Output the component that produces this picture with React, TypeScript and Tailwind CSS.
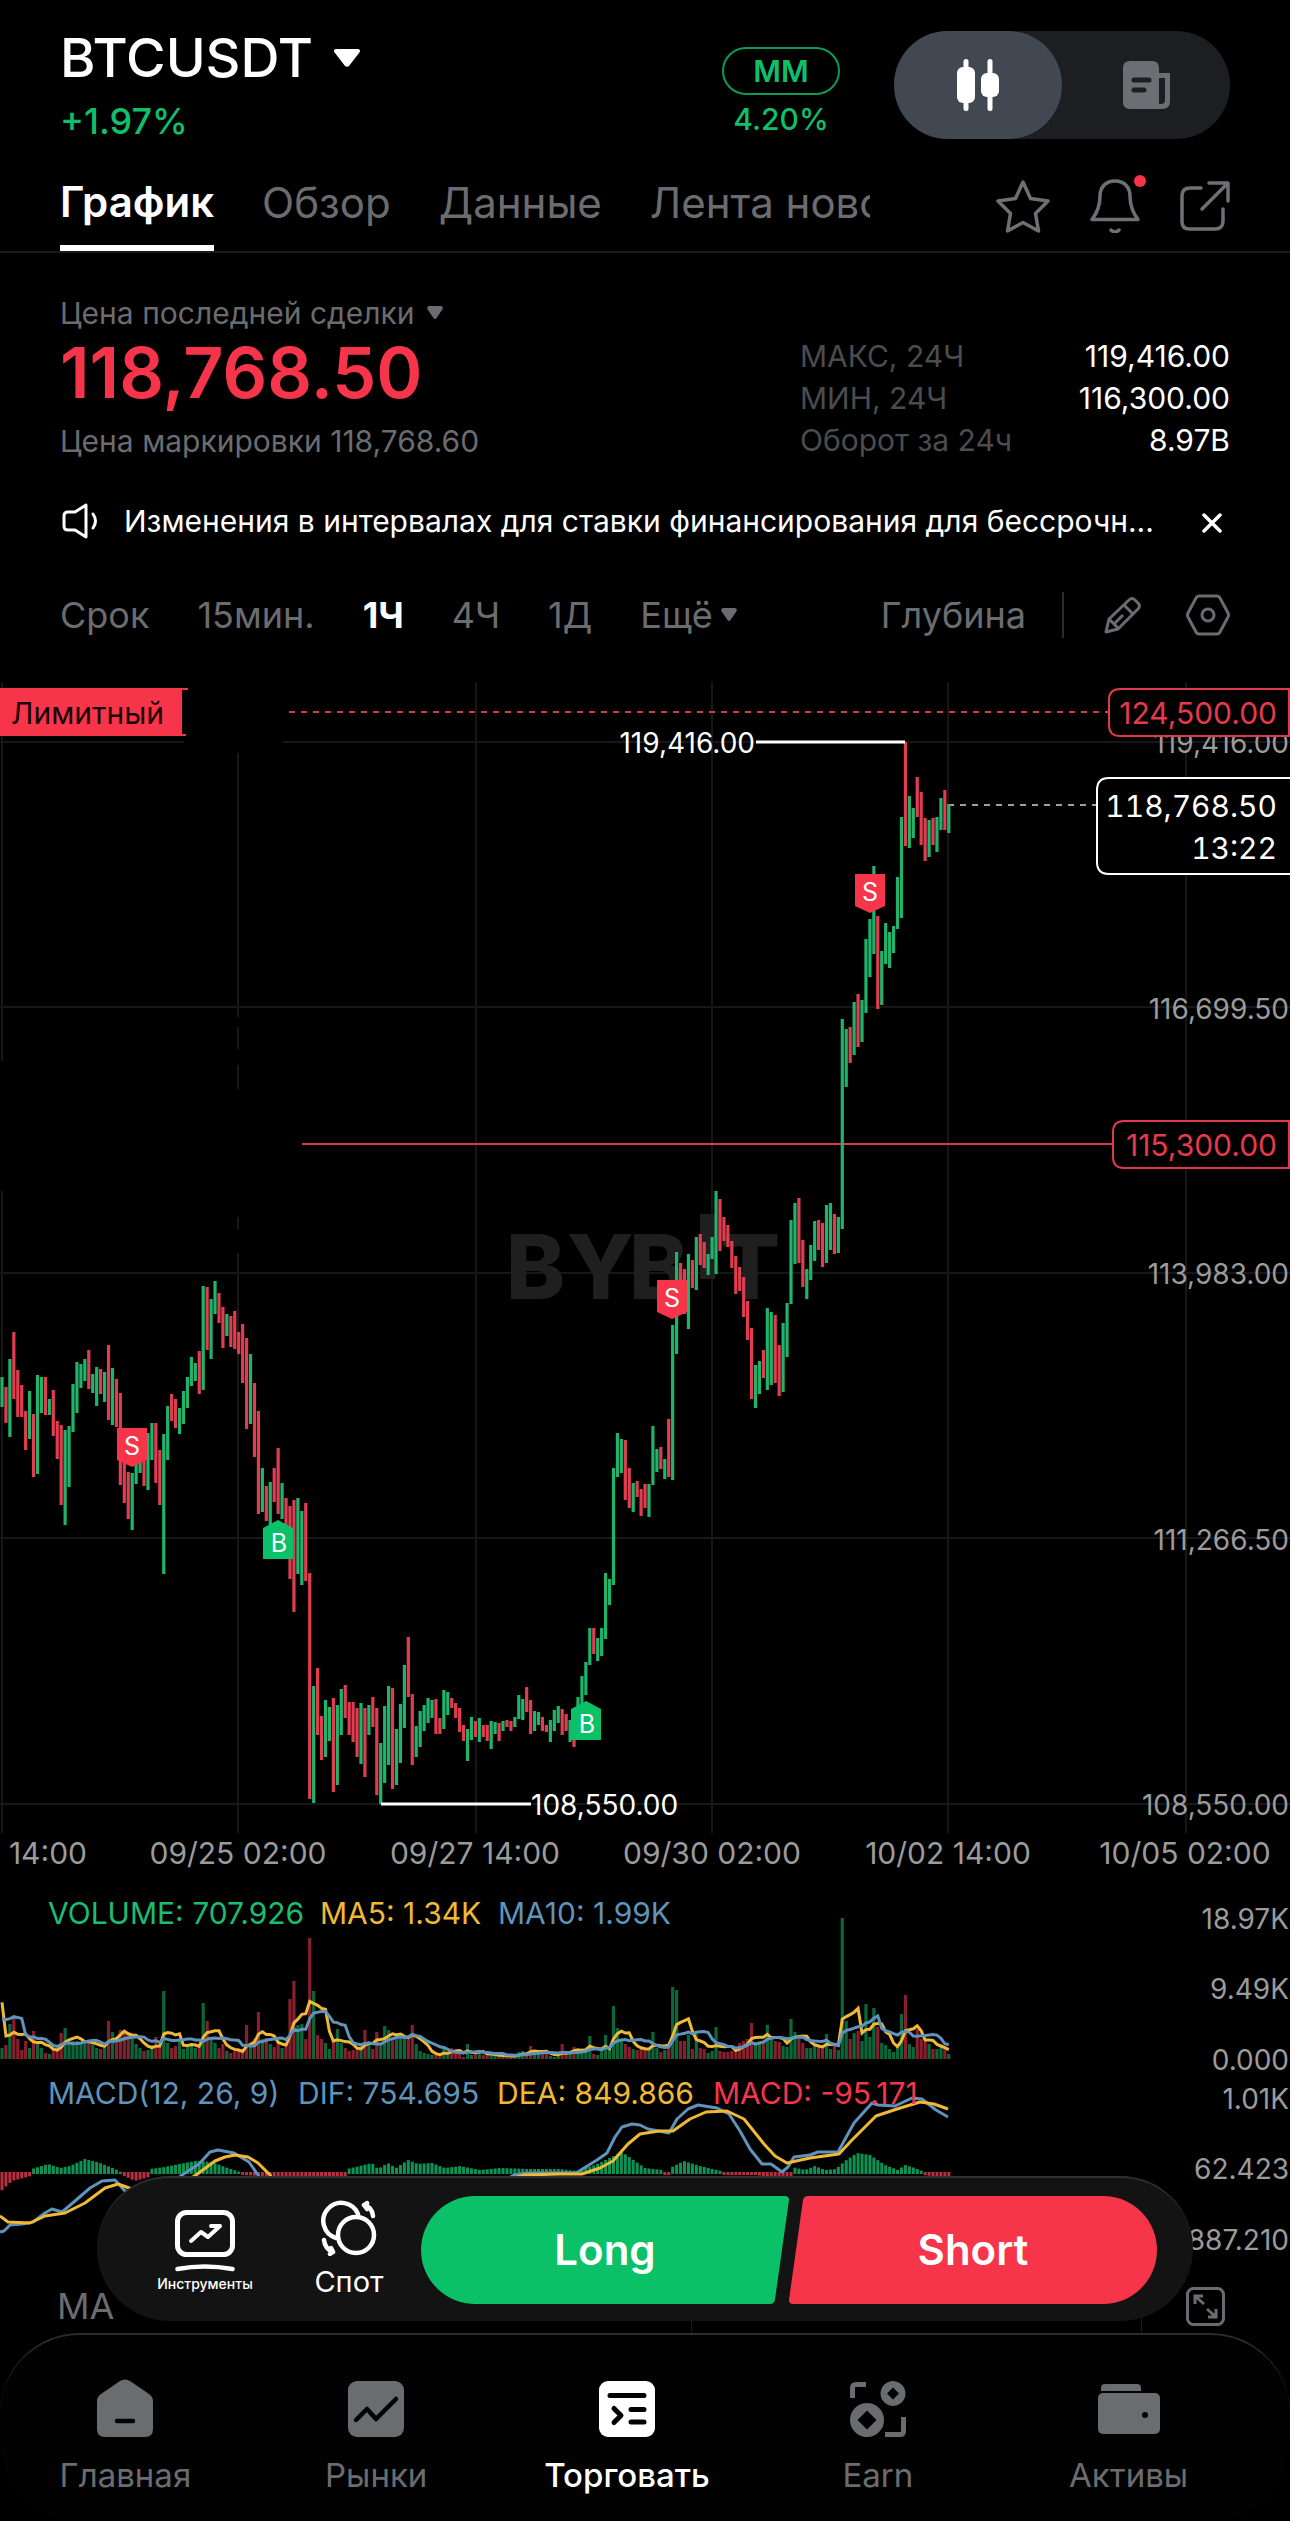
import { memo, useMemo } from 'react';

type ChildrenType = { children: React.ReactNode };
type Point = [number, number];

const GREEN = '#1fb36b';
const RED = '#e03d50';
const YELLOW = '#efb935';
const BLUE = '#5f93bb';

const FIRST_X = 2;
const STEP = 3.945;
const VOLUME_BASE = 2058;
const MACD_ZERO = 2172;

// u = up, d = down, then the top and bottom of every hourly candle
const CANDLES = `
u1376-1406 d1386-1422 u1358-1436 d1331-1398 d1369-1416 d1384-1416 d1410-1449 u1390-1438 d1413-1476 u1374-1473
u1376-1412 d1376-1414 u1398-1414 d1389-1435 d1420-1458 d1424-1504 u1429-1524 u1425-1486 u1383-1431 u1361-1412
u1363-1387 u1358-1380 d1349-1388 u1373-1392 u1366-1405 d1368-1393 u1371-1401 d1344-1419 u1367-1424 d1378-1426
d1392-1484 d1437-1502 d1471-1518 u1472-1529 u1453-1483 u1445-1472 d1441-1485 u1432-1489 u1422-1459 d1422-1482
d1449-1504 u1433-1573 u1405-1459 d1393-1420 d1398-1427 u1407-1433 u1390-1423 u1376-1407 u1356-1385 u1362-1380
d1350-1393 u1285-1389 d1286-1349 u1298-1358 u1280-1313 d1292-1322 d1306-1347 u1313-1335 d1315-1346 d1310-1348
d1331-1353 d1323-1382 d1337-1428 u1353-1423 d1382-1456 d1410-1513 u1467-1511 d1485-1520 u1481-1526 d1467-1501
d1447-1513 u1482-1518 d1497-1527 d1505-1578 d1499-1611 u1497-1573 u1510-1584 d1502-1580 d1572-1798 u1685-1802
d1667-1734 d1715-1759 u1699-1756 u1706-1740 d1697-1791 u1704-1784 u1688-1734 d1684-1717 d1701-1734 d1701-1741
d1707-1756 u1702-1763 d1707-1776 u1704-1734 d1696-1726 d1707-1794 u1742-1803 u1705-1782 u1685-1764 d1687-1788
u1728-1784 u1703-1762 u1664-1727 d1636-1696 d1693-1764 u1725-1756 u1710-1746 u1704-1730 u1697-1722 u1699-1717
d1698-1733 d1717-1733 u1689-1728 u1691-1714 d1697-1707 d1702-1717 d1707-1731 d1724-1740 u1728-1760 u1716-1739
d1720-1736 u1717-1741 d1724-1736 d1724-1740 u1720-1748 u1721-1733 d1722-1740 u1720-1730 d1719-1726 d1720-1730
u1716-1726 u1694-1718 u1698-1719 d1686-1711 d1699-1733 u1710-1730 u1711-1724 d1716-1730 d1724-1731 u1719-1741
u1709-1730 u1705-1722 d1708-1734 d1713-1730 u1719-1741 d1712-1746 u1696-1731 u1675-1714 u1661-1694 u1627-1664
d1627-1653 u1637-1660 u1627-1655 u1572-1638 u1578-1604 u1467-1584 u1432-1476 u1438-1472 d1439-1499 d1467-1507
u1482-1511 d1480-1496 d1488-1515 d1483-1507 u1483-1516 u1425-1484 u1448-1471 d1446-1468 u1458-1478 d1418-1476
u1324-1479 u1251-1353 d1262-1306 d1268-1313 u1253-1328 d1259-1287 u1236-1289 d1233-1264 d1241-1267 u1253-1274
u1236-1258 u1190-1273 d1198-1250 d1216-1240 d1224-1246 d1240-1267 d1255-1293 d1266-1290 d1276-1316 d1300-1339
d1327-1398 u1364-1407 u1360-1393 d1349-1377 u1307-1389 u1311-1384 d1314-1382 d1344-1395 u1322-1391 u1302-1356
u1219-1303 u1202-1263 d1197-1262 d1239-1286 u1268-1298 u1244-1279 u1220-1260 d1219-1249 d1222-1266 u1204-1262
u1202-1249 d1213-1253 u1216-1252 u1018-1228 u1028-1086 d1026-1062 u1001-1054 d993-1046 u999-1041 u938-1012
u918-976 u865-953 d915-1008 u950-1004 u922-963 u931-967 u925-952 u876-928 u816-917 d741-845
u795-847 u807-837 d776-816 d791-844 d817-860 u819-856 d817-844 u816-851 u797-829 d789-829
u803-832`
  .trim()
  .split(/\s+/)
  .map((item) => {
    const [top, bottom] = item.slice(1).split('-').map(Number);
    return { up: item[0] === 'u', top, bottom };
  });

// bar heights; the first nine stand left of the visible range and only feed the averages
const VOLUMES = [
  20, 25, 27, 25, 20, 182, 30, 30, 30,
  11, 14, 35, 44, 20, 9, 18, 11, 28, 16, 11, 6, 5, 11, 11, 26, 31, 17, 18, 18, 17, 17, 15, 16, 11, 10, 11, 38, 27, 16,
  29, 29, 25, 21, 15, 11, 8, 9, 14, 22, 12, 68, 16, 11, 13, 18, 10, 15, 16, 11, 11, 56, 38, 20, 16, 11, 15, 8, 6, 8, 8,
  8, 34, 15, 20, 47, 20, 21, 15, 12, 16, 11, 16, 60, 78, 34, 35, 20, 121, 68, 24, 20, 16, 10, 20, 30, 16, 11, 8, 9, 10,
  13, 29, 16, 10, 27, 16, 33, 29, 21, 21, 21, 21, 23, 34, 15, 8, 6, 5, 4, 4, 3, 13, 5, 11, 8, 5, 2, 15, 4, 7, 7, 4,
  3, 4, 5, 3, 2, 2, 3, 5, 7, 8, 3, 13, 9, 5, 7, 5, 3, 2, 4, 15, 5, 6, 12, 8, 11, 10, 23, 5, 4, 8, 24, 11, 53, 31,
  20, 15, 12, 10, 9, 10, 10, 11, 27, 11, 7, 9, 15, 72, 69, 18, 18, 24, 10, 27, 11, 10, 6, 8, 32, 8, 7, 7, 8, 12, 16,
  18, 20, 36, 17, 18, 18, 34, 20, 18, 17, 13, 12, 40, 27, 20, 16, 11, 11, 13, 14, 11, 25, 10, 14, 9, 141, 38, 20, 26,
  28, 18, 55, 22, 51, 32, 16, 14, 10, 7, 15, 45, 64, 15, 12, 30, 20, 18, 15, 10, 10, 12, 10, 5,
];

const MACD_SHAPE: Point[] = [
  [0, -19], [12, -8], [31, -3], [32, 4], [48, 9], [60, 5], [70, 7], [85, 14], [100, 10], [120, 2], [122, -2],
  [135, -8], [149, -4], [150, 4], [165, 6], [180, 9], [195, 12], [212, 11], [225, 6], [240, 1], [242, -2], [280, -4],
  [346, -4], [347, 4], [372, 10], [378, 4], [388, 10], [396, 5], [408, 13], [418, 9], [432, 10], [445, 5], [460, 7],
  [480, 3], [500, 5], [530, 4], [560, 4], [577, 2], [595, 8], [622, 21], [632, 14], [645, 5], [662, 3], [663, -2],
  [670, -2], [672, 6], [684, 12], [700, 7], [721, 2], [722, -2], [755, -2], [770, -4], [791, -4], [792, 6], [805, 3],
  [815, 7], [825, 3], [836, 4], [845, 12], [857, 20], [870, 18], [885, 8], [898, 3], [905, 8], [915, 5], [922, 2],
  [923, -2], [940, -4], [948, -3],
];

const DIF_LINE: Point[] = [
  [0, 2231], [4, 2230], [10, 2224], [22, 2223], [33, 2221], [45, 2212], [52, 2208], [62, 2211], [75, 2200],
  [90, 2187], [102, 2180], [115, 2179], [125, 2190], [150, 2196], [172, 2182], [182, 2174], [199, 2163], [210, 2151],
  [218, 2149], [234, 2152], [249, 2161], [258, 2174], [290, 2240], [400, 2240], [500, 2182], [514, 2174], [527, 2172],
  [576, 2172], [597, 2159], [607, 2152], [615, 2136], [622, 2126], [632, 2123], [640, 2124], [648, 2128],
  [669, 2132], [677, 2118], [688, 2108], [698, 2104], [717, 2107], [729, 2113], [740, 2130], [750, 2148], [762, 2163],
  [771, 2163], [782, 2171], [788, 2166], [794, 2156], [810, 2154], [818, 2151], [838, 2151], [854, 2122], [872, 2102],
  [878, 2104], [895, 2105], [912, 2097], [922, 2098], [936, 2109], [948, 2116],
];

const DEA_LINE: Point[] = [
  [0, 2215], [8, 2221], [30, 2222], [45, 2215], [65, 2212], [85, 2202], [105, 2187], [118, 2183], [132, 2188],
  [170, 2190], [196, 2174], [215, 2160], [225, 2156], [235, 2154], [248, 2156], [258, 2162], [270, 2174], [300, 2230],
  [420, 2230], [510, 2178], [525, 2174], [560, 2173], [582, 2173], [600, 2167], [613, 2160], [628, 2143], [640, 2133],
  [659, 2130], [673, 2130], [690, 2118], [706, 2111], [727, 2110], [744, 2118], [764, 2143], [775, 2155], [787, 2162],
  [810, 2157], [839, 2153], [851, 2140], [876, 2115], [897, 2108], [920, 2101], [934, 2103], [948, 2108],
];

const GRID_X = [476, 712, 948, 1186];
const GRID_Y = [1006, 1272, 1537, 1803];

const AXIS = [
  { y: 752, text: '119,416.00' },
  { y: 1018, text: '116,699.50' },
  { y: 1283, text: '113,983.00' },
  { y: 1549, text: '111,266.50' },
  { y: 1814, text: '108,550.00' },
  { y: 1928, text: '18.97K' },
  { y: 1998, text: '9.49K' },
  { y: 2069, text: '0.000' },
  { y: 2108, text: '1.01K' },
  { y: 2178, text: '62.423' },
  { y: 2249, text: '-887.210' },
];

const TIMES = [
  { x: 238, text: '09/25 02:00' },
  { x: 475, text: '09/27 14:00' },
  { x: 712, text: '09/30 02:00' },
  { x: 948, text: '10/02 14:00' },
  { x: 1185, text: '10/05 02:00' },
];

const barX = (index: number) => FIRST_X + STEP * index;

const toPoints = (points: Point[]) => points.map(([x, y]) => `${x},${y}`).join(' ');

const average = (length: number): Point[] =>
  CANDLES.map((_, index) => {
    const end = index + 10;
    const sum = VOLUMES.slice(end - length, end).reduce((total, value) => total + value, 0);
    return [barX(index), VOLUME_BASE - sum / length];
  });

const macdAt = (x: number) => {
  const next = MACD_SHAPE.findIndex((point) => point[0] >= x);
  if (next <= 0) return MACD_SHAPE[next === 0 ? 0 : MACD_SHAPE.length - 1][1];
  const [x0, y0] = MACD_SHAPE[next - 1];
  const [x1, y1] = MACD_SHAPE[next];
  return y0 + ((y1 - y0) * (x - x0)) / (x1 - x0);
};

const SellMarker = ({ x, y }: { x: number; y: number }) => (
  <g>
    <path d={`M${x - 15} ${y}h30v32l-15 7l-15 -7z`} fill="#f6354a" />
    <text x={x} y={y + 27} textAnchor="middle" fontSize="25" fill="#fff">
      S
    </text>
  </g>
);

const BuyMarker = ({ x, y }: { x: number; y: number }) => (
  <g>
    <path d={`M${x - 15} ${y + 8}l15 -8l15 8v31h-30z`} fill="#0bc168" />
    <text x={x + 1} y={y + 32} textAnchor="middle" fontSize="25" fill="#fff">
      B
    </text>
  </g>
);

const PriceChart = memo(() => {
  const ma5 = useMemo(() => toPoints(average(5)), []);
  const ma10 = useMemo(() => toPoints(average(10)), []);

  return (
    <svg className="block w-full h-auto" viewBox="0 670 1290 1600" role="img" aria-label="BTCUSDT">
      {/* grid */}
      <g stroke="#171717" strokeWidth="2">
        {GRID_X.map((x) => (
          <line key={x} x1={x} x2={x} y1="681" y2="1832" />
        ))}
        {GRID_Y.map((y) => (
          <line key={y} x1="0" x2="1290" y1={y} y2={y} />
        ))}
        <path d="M0 741H184M283 741H1290" />
        <path d="M2 681V1060M2 1190V1832" />
        <path d="M238 752V1016M238 1026V1048M238 1064V1088M238 1216V1229M238 1252V1832" />
      </g>

      <g fill="#1f1f1f" fontSize="89" fontWeight="800">
        <text x="506" y="1298">B</text>
        <text x="567" y="1298">Y</text>
        <text x="629" y="1298">B</text>
        <text x="695" y="1278">I</text>
        <text x="720" y="1298">T</text>
      </g>

      <g fill="#9b9b9b" fontSize="28" textAnchor="end">
        {AXIS.map(({ y, text }) => (
          <text key={text} x="1289" y={y}>
            {text}
          </text>
        ))}
      </g>

      {/* order lines */}
      <line x1="289" x2="1108" y1="711" y2="711" stroke="#d43b4e" strokeWidth="2" strokeDasharray="6 6" />
      <line x1="302" x2="1112" y1="1143" y2="1143" stroke="#d9384b" strokeWidth="2" />
      <line x1="948" x2="1097" y1="804" y2="804" stroke="#d5d5d5" strokeWidth="1.5" strokeDasharray="6 6" />

      {/* candles */}
      {CANDLES.map(({ up, top, bottom }, index) => (
        <rect
          key={index}
          x={barX(index) - 1.6}
          y={top}
          width="3.2"
          height={bottom - top}
          fill={up ? GREEN : RED}
        />
      ))}

      <g stroke="#fff" strokeWidth="3">
        <line x1="756" x2="905" y1="741" y2="741" />
        <line x1="381" x2="531" y1="1803" y2="1803" />
      </g>
      <g fill="#fff" fontSize="28">
        <text x="755" y="752" textAnchor="end">
          119,416.00
        </text>
        <text x="531" y="1814">108,550.00</text>
      </g>

      <SellMarker x={132} y={1427} />
      <SellMarker x={672} y={1279} />
      <SellMarker x={870} y={873} />
      <BuyMarker x={278} y={1519} />
      <BuyMarker x={586} y={1700} />

      {/* price tags */}
      <path d="M0 687H188V689H182V733H186V735H0z" fill="#f6354a" />
      <text x="11" y="723" fontSize="30" fill="#1a0306">
        Лимитный
      </text>
      <g fill="#000" strokeWidth="2">
        <path d="M1290 688H1120Q1109 688 1109 699V724Q1109 735 1120 735H1289V688" stroke="#e0394c" />
        <path d="M1290 1120H1124Q1113 1120 1113 1131V1156Q1113 1167 1124 1167H1289V1120" stroke="#e0394c" />
        <path d="M1290 777H1109Q1097 777 1097 789V861Q1097 873 1109 873H1290" stroke="#fff" />
      </g>
      <g fontSize="30" textAnchor="end">
        <text x="1277" y="723" fill="#e6394d">124,500.00</text>
        <text x="1277" y="1155" fill="#e6394d">115,300.00</text>
        <text x="1277" y="816" fill="#fff" className="tabular-nums">118,768.50</text>
        <text x="1277" y="858" fill="#fff" className="tabular-nums">13:22</text>
      </g>

      <g fill="#9b9b9b" fontSize="30" textAnchor="middle">
        <text x="87" y="1863" textAnchor="end">
          14:00
        </text>
        {TIMES.map(({ x, text }) => (
          <text key={text} x={x} y="1863">
            {text}
          </text>
        ))}
      </g>

      {/* volume */}
      {CANDLES.map(({ up }, index) => (
        <rect
          key={index}
          x={barX(index) - 1.6}
          y={VOLUME_BASE - VOLUMES[index + 9]}
          width="3.2"
          height={VOLUMES[index + 9]}
          fill={up ? '#0b6739' : '#86202e'}
        />
      ))}
      <polyline points={ma5} fill="none" stroke={YELLOW} strokeWidth="3" />
      <polyline points={ma10} fill="none" stroke={BLUE} strokeWidth="3" />
      <g fontSize="30">
        <text x="48" y="1923" fill="#1bbd70">VOLUME: 707.926</text>
        <text x="320" y="1923" fill={YELLOW}>MA5: 1.34K</text>
        <text x="498" y="1923" fill={BLUE}>MA10: 1.99K</text>
      </g>

      {/* macd */}
      {CANDLES.map((_, index) => {
        const value = macdAt(barX(index));
        return (
          <rect
            key={index}
            x={barX(index) - 1.5}
            y={value > 0 ? MACD_ZERO - value : MACD_ZERO - 1}
            width="3"
            height={Math.abs(value) + 1}
            fill={value > 0 ? '#0c9355' : '#b92e40'}
          />
        );
      })}
      <polyline points={toPoints(DIF_LINE)} fill="none" stroke={BLUE} strokeWidth="3" strokeLinejoin="round" />
      <polyline points={toPoints(DEA_LINE)} fill="none" stroke={YELLOW} strokeWidth="3" strokeLinejoin="round" />
      <g fontSize="30">
        <text x="48" y="2103" fill={BLUE}>MACD(12, 26, 9)</text>
        <text x="298" y="2103" fill={BLUE}>DIF: 754.695</text>
        <text x="497" y="2103" fill={YELLOW}>DEA: 849.866</text>
        <text x="713" y="2103" fill="#f6354a">MACD: -95.171</text>
      </g>
    </svg>
  );
});

const Header = () => (
  <header className="px-[60px] pt-[31px] flex items-start">
    <div className="flex-1">
      <button className="flex items-center gap-5 text-[54px] leading-[54px] font-medium">
        BTCUSDT
        <svg className="w-7 h-5" viewBox="0 0 28 20" fill="currentColor" aria-hidden="true">
          <path d="M4 1h20c3 0 4 2 2 4L16 18c-1 1-3 1-4 0L2 5C0 3 1 1 4 1z" />
        </svg>
      </button>
      <div className="mt-4 text-[36px] leading-10 font-medium text-[#0fbf6a]">+1.97%</div>
    </div>

    <div className="mt-4 mr-[54px] text-[#0fbf6a] text-center">
      <div className="w-[118px] h-12 rounded-full border-2 border-[#0c9a56] flex items-center justify-center text-[30px] font-semibold">
        MM
      </div>
      <div className="mt-2 text-[30px] leading-8 font-medium">4.20%</div>
    </div>

    <div className="flex rounded-full bg-[#1d1e22]">
      <button
        aria-label="График"
        className="w-[168px] h-[108px] rounded-full bg-[#414852] flex items-center justify-center"
      >
        <svg className="w-[42px] h-[54px]" viewBox="0 0 42 54" fill="#fff">
          <rect x="6.500" y="1" width="5" height="52" rx="2.500" />
          <rect x="0" y="9" width="18" height="36" rx="6" />
          <rect x="30.500" y="1" width="5" height="52" rx="2.500" />
          <rect x="24" y="15" width="18" height="24" rx="6" />
        </svg>
      </button>
      <button aria-label="Торговать" className="w-[168px] h-[108px] flex items-center justify-center">
        <svg className="w-[47px] h-12" viewBox="0 0 47 48" fill="#6c6e73">
          <path d="M7 0h22q7 0 7 7v5h11v28q0 8-8 8H7q-7 0-7-7V7q0-7 7-7z" />
          <path d="M36 17h6v22q0 4-4 4h-2z" fill="#1d1e22" />
          <path d="M11 19h15M11 29h10" stroke="#1d1e22" strokeWidth="5" strokeLinecap="round" />
        </svg>
      </button>
    </div>
  </header>
);

const Tabs = () => (
  <nav className="mt-5 px-[60px] border-b-2 border-[#1a1a1b] flex items-center justify-between">
    <div className="w-[810px] flex gap-12 overflow-hidden whitespace-nowrap text-[42px] text-[#6b6c70]">
      <button className="h-[90px] pb-1 border-b-[6px] border-white font-semibold text-white">График</button>
      <button className="h-[90px] pb-2">Обзор</button>
      <button className="h-[90px] pb-2">Данные</button>
      <button className="h-[90px] pb-2">Лента новостей</button>
    </div>
    <div className="flex items-center gap-10 text-[#6f7073]">
      <button aria-label="Избранное">
        <svg className="w-[54px] h-[54px]" viewBox="0 0 54 54" fill="none" stroke="currentColor" strokeWidth="3.500" strokeLinejoin="round">
          <path d="M27 3l7.500 16.500L52 22 39.500 34.500 42.500 52 27 43.500 11.500 52 14.500 34.500 2 22l17.500-2.500z" />
        </svg>
      </button>
      <button aria-label="Уведомления" className="relative">
        <svg className="w-[50px] h-[54px]" viewBox="0 0 50 54" fill="none" stroke="currentColor" strokeWidth="3.500" strokeLinejoin="round" strokeLinecap="round">
          <path d="M25 2C15 2 10 9 10 17C10 28 7 34 2 40.500H48C43 34 40 28 40 17C40 9 35 2 25 2z" />
          <path d="M21 51q4 4 8 0" />
        </svg>
        <span className="absolute -top-1 -right-1.5 w-3 h-3 rounded-full bg-[#f6354a]" />
      </button>
      <button aria-label="Поделиться">
        <svg className="w-[50px] h-[50px]" viewBox="0 0 50 50" fill="none" stroke="currentColor" strokeWidth="3.500" strokeLinejoin="round" strokeLinecap="round">
          <path d="M21 7H10q-8 0-8 8v26q0 7 8 7h25q8 0 8-8V28" />
          <path d="M29 2h19v18M47 3L22 28" />
        </svg>
      </button>
    </div>
  </nav>
);

const Stat = ({ label, children }: ChildrenType & { label: string }) => (
  <div className="flex justify-between leading-[42px]">
    <dt className="text-[#4b4c4f]">{label}</dt>
    <dd className="text-white">{children}</dd>
  </div>
);

const Summary = () => (
  <section className="px-[60px] pt-10 flex items-end justify-between text-[30px] text-[#6b6c70]">
    <div>
      <button className="flex items-center gap-3 leading-10">
        Цена последней сделки
        <svg className="w-4 h-3.5" viewBox="0 0 16 14" fill="currentColor" aria-hidden="true">
          <path d="M2 0h12q3 1 1 4L9.500 12q-1.500 2-3 0L1 4Q-1 1 2 0z" />
        </svg>
      </button>
      <div className="text-[70px] leading-[80px] font-semibold text-[#f6354a]">118,768.50</div>
      <div className="mt-2 leading-10">Цена маркировки 118,768.60</div>
    </div>
    <dl className="w-[430px]">
      <Stat label="МАКС, 24Ч">119,416.00</Stat>
      <Stat label="МИН, 24Ч">116,300.00</Stat>
      <Stat label="Оборот за 24ч">8.97B</Stat>
    </dl>
  </section>
);

const Notice = () => (
  <div className="mt-10 px-[60px] flex items-center text-[30px] leading-10">
    <svg className="w-10 h-10 mr-6" viewBox="0 0 40 40" fill="none" stroke="currentColor" strokeWidth="3" strokeLinejoin="round" strokeLinecap="round" aria-hidden="true">
      <path d="M26 4L15 11H8q-4 0-4 4v10q0 4 4 4h7l11 7z" />
      <path d="M33 13q5 7 0 14" />
    </svg>
    <p className="flex-1">Изменения в интервалах для ставки финансирования для бессрочн...</p>
    <button aria-label="Закрыть" className="ml-12 mr-2">
      <svg className="w-5 h-5 mt-1" viewBox="0 0 20 20" stroke="currentColor" strokeWidth="3.500" strokeLinecap="round">
        <path d="M2 2l16 16M18 2L2 18" />
      </svg>
    </button>
  </div>
);

const Intervals = () => (
  <div className="mt-[50px] mb-8 px-[60px] flex items-center justify-between text-[36px] leading-[48px] text-[#6b6c70]">
    <div className="flex gap-12">
      <button>Срок</button>
      <button>15мин.</button>
      <button className="font-bold text-white">1Ч</button>
      <button>4Ч</button>
      <button>1Д</button>
      <button className="flex items-center gap-2">
        Ещё
        <svg className="w-4 h-3.5" viewBox="0 0 16 14" fill="currentColor" aria-hidden="true">
          <path d="M2 0h12q3 1 1 4L9.500 12q-1.500 2-3 0L1 4Q-1 1 2 0z" />
        </svg>
      </button>
    </div>
    <div className="flex items-center">
      <button>Глубина</button>
      <div className="w-0.5 h-[46px] ml-9 mr-10 bg-[#2a2b2d]" />
      <button aria-label="Рисование" className="mr-11">
        <svg className="w-[38px] h-[38px]" viewBox="0 0 38 38" fill="none" stroke="currentColor" strokeWidth="3" strokeLinejoin="round">
          <path d="M2 36L5 23 25 4q3-3 6 0l3 3q3 3 0 6L14 33z" />
          <path d="M20 9l9 9M5 23l10 10M11 27l8-8" />
        </svg>
      </button>
      <button aria-label="Настройки">
        <svg className="w-[44px] h-[42px]" viewBox="0 0 44 42" fill="none" stroke="currentColor" strokeWidth="3" strokeLinejoin="round">
          <path d="M13 2h18q2 0 3 2l8 15q1 2 0 4l-8 15q-1 2-3 2H13q-2 0-3-2L2 23q-1-2 0-4L10 4q1-2 3-2z" />
          <circle cx="22" cy="21" r="6" />
        </svg>
      </button>
    </div>
  </div>
);

const ActionBar = () => (
  <div className="absolute inset-x-[97px] bottom-3 h-[145px] pl-[60px] pr-9 rounded-full border-t-2 border-[#303030] bg-[#131313] flex items-center text-white">
    <button className="w-24 mt-1 flex flex-col items-center text-[14px] leading-5 font-medium">
      <svg className="w-[60px] h-[62px] mb-0.5" viewBox="0 0 60 62" fill="none" stroke="#fff" strokeLinecap="round" strokeLinejoin="round">
        <rect x="2.500" y="2.500" width="55" height="42" rx="9" strokeWidth="5" />
        <path d="M16 31l10-9 7 5 12-11M36 16h9" strokeWidth="4" />
        <path d="M2.500 59q27-5 55 0" strokeWidth="4.500" />
      </svg>
      Инструменты
    </button>
    <button className="w-20 ml-14 mr-8 flex flex-col items-center text-[29px] leading-9">
      <svg className="w-14 h-14 mb-2" viewBox="0 0 56 56" fill="none" stroke="#fff" strokeWidth="4.500" strokeLinecap="round" strokeLinejoin="round">
        <path d="M37 14A18 18 0 1 0 15 38" />
        <circle cx="35" cy="35" r="18" />
        <path d="M43 5q8 2 9 11M43 5l3-2M43 5l3 4M3 40q1 9 9 12M12 52l-3 2M12 52l-2-4" />
      </svg>
      Спот
    </button>
    <div className="flex-1 flex text-[42px] leading-[44px] font-semibold">
      <button className="relative flex-1 h-[108px]">
        <svg className="absolute inset-0 w-full h-full" viewBox="0 0 365 108" preserveAspectRatio="none" fill="#0bc168" aria-hidden="true">
          <path d="M54 0H361q4 0 4 4L351 104q-1 4-5 4H54A54 54 0 0 1 54 0z" />
        </svg>
        <span className="relative">Long</span>
      </button>
      <button className="relative flex-1 h-[108px]">
        <svg className="absolute inset-0 w-full h-full" viewBox="0 0 368 108" preserveAspectRatio="none" fill="#f6354a" aria-hidden="true">
          <path d="M19 0H314A54 54 0 0 1 314 108H4q-4 0-4-4L14 4q1-4 5-4z" />
        </svg>
        <span className="relative">Short</span>
      </button>
    </div>
  </div>
);

const IndicatorRow = () => (
  <div className="relative h-[62px] flex text-[36px] text-[#6b6c70]">
    <div className="flex-[692] border-r border-[#1c1c1c]">
      <button className="ml-[57px] mt-2">MA</button>
    </div>
    <div className="flex-[450] border-r border-[#1c1c1c]" />
    <div className="flex-[148]">
      <button aria-label="Развернуть" className="block ml-11 mt-4">
        <svg className="w-[39px] h-[39px]" viewBox="0 0 39 39" fill="none" stroke="currentColor" strokeWidth="3">
          <rect x="1.500" y="1.500" width="36" height="36" rx="6" />
          <path d="M9 17V9h8M9 9l9 8M30 22v8h-8M30 30l-9-8" />
        </svg>
      </button>
    </div>
    <ActionBar />
  </div>
);

const NavItem = ({ label, active, children }: ChildrenType & { label: string; active?: boolean }) => (
  <a
    href="#"
    className={`flex flex-col items-center text-[33px] leading-10 ${active ? 'font-medium text-white' : 'text-[#6b6c70]'}`}
  >
    <svg className="w-16 h-[60px] mb-4" viewBox="0 0 64 60" fill="currentColor" aria-hidden="true">
      {children}
    </svg>
    {label}
  </a>
);

const BottomNav = () => (
  <nav className="h-[188px] pt-11 pr-9 grid grid-cols-5 rounded-[80px] border-t-2 border-[#2c2c2c] bg-[#020202]">
    <NavItem label="Главная">
      <path d="M27 2q5-3 10 0l19 13q4 3 4 7v28q0 8-8 8H12q-8 0-8-8V22q0-4 4-7z" />
      <path d="M24 42h16" stroke="#020202" strokeWidth="4.500" strokeLinecap="round" />
    </NavItem>
    <NavItem label="Рынки">
      <rect x="4" y="2" width="56" height="56" rx="9" />
      <path d="M12 41l11-11 9 10 20-20" fill="none" stroke="#020202" strokeWidth="4.500" strokeLinecap="round" strokeLinejoin="round" />
    </NavItem>
    <NavItem label="Торговать" active>
      <rect x="4" y="2" width="56" height="56" rx="9" />
      <path d="M15 16.500h34M36 30.500h13M36 43h13M19 29.500l7 7-7 7" fill="none" stroke="#020202" strokeWidth="5" strokeLinecap="round" strokeLinejoin="round" />
    </NavItem>
    <NavItem label="Earn">
      <path d="M4 19V9q0-6 6-6h10v5H9v11zM60 38v14q0 6-6 6H39v-5h16V38z" />
      <path fillRule="evenodd" d="M47 2a12.500 12.500 0 1 0 .01 0zM47 8.500l6 6-6 6-6-6z" />
      <path fillRule="evenodd" d="M21 24a17 17 0 1 0 .01 0zM21 31.500l9.500 9.500-9.500 9.500-9.500-9.500z" />
    </NavItem>
    <NavItem label="Активы">
      <path d="M8 5h32q4 0 4 4v3H4V9q0-4 4-4z" />
      <rect x="1" y="14" width="62" height="41" rx="5" />
      <circle cx="48" cy="36" r="3" fill="#020202" />
    </NavItem>
  </nav>
);

const App: React.FC = () => {
  return (
    <main className="min-h-screen overflow-hidden bg-black text-white font-['Inter','Noto_Sans',sans-serif]">
      <Header />
      <Tabs />
      <Summary />
      <Notice />
      <Intervals />
      <PriceChart />
      <IndicatorRow />
      <BottomNav />
    </main>
  );
};

export default App;
